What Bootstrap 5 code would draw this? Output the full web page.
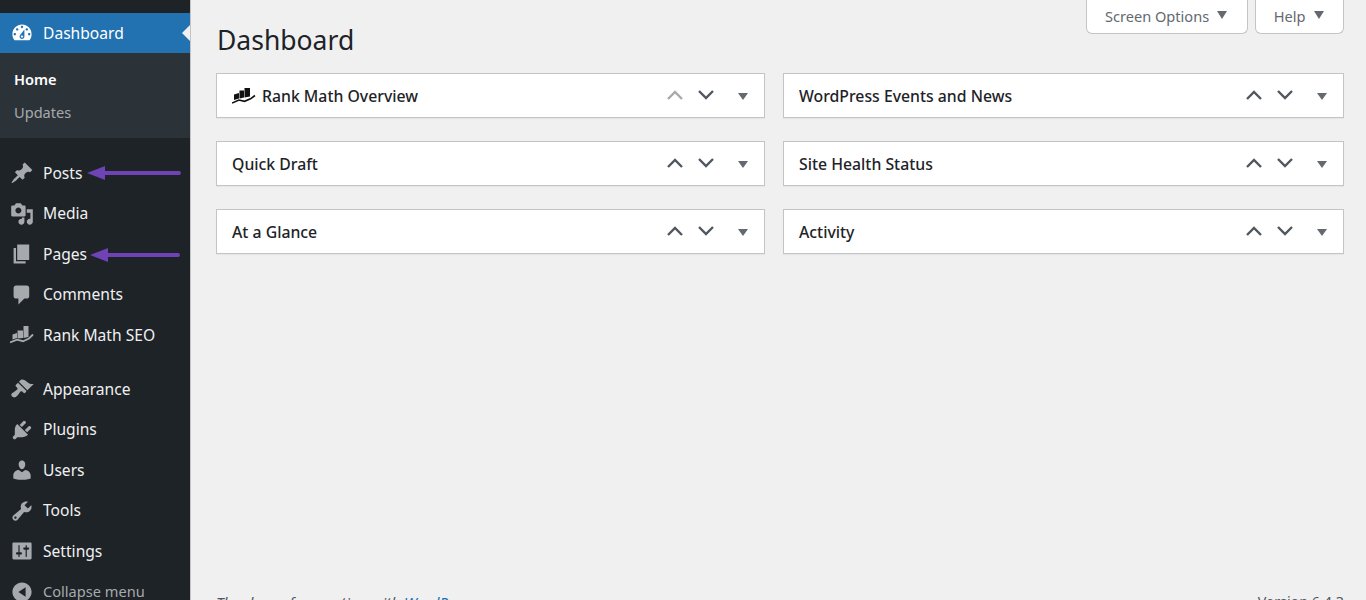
<!DOCTYPE html>
<html lang="en">
<head>
<meta charset="utf-8">
<title>Dashboard</title>
<link href="https://cdn.jsdelivr.net/npm/bootstrap@5.3.0/dist/css/bootstrap.min.css" rel="stylesheet">
<style>
html, body { height: 600px; overflow: hidden; }
body { background: #f0f0f1; font-family: "Noto Sans", "Open Sans", sans-serif; color: #1d2327; }
.wp-shell { height: 600px; overflow: hidden; }
.wp-side { width: 190px; background: #1d2327; padding-top: 13px; flex: none; height: 600px; overflow: hidden; border-right: 1px solid #c3c4c7; box-sizing: content-box; position: relative; }
.wp-item { height: 40.5px; color: #f0f0f1; font-size: 15.6px; padding-left: 9.5px; gap: 9.5px; text-decoration: none; }
.wp-item svg { width: 24px; height: 24px; fill: #a7aaad; flex: none; }
.wp-cur { height: 40px; background: #2271b1; color: #fff; position: relative; padding-top: 2px; }
.wp-cur svg { fill: #fff; margin-top: -2px; }
.wp-cur::after { content: ""; position: absolute; right: 0; top: 12px; border: 8px solid transparent; border-right-color: #f0f0f1; border-left-width: 0; }
.wp-sub { background: #2c3338; height: 85px; padding: 10px 14px; margin-bottom: 15px; }
.wp-sub a { display: block; height: 33px; line-height: 33px; font-size: 14.6px; color: #a7aaad; text-decoration: none; }
.wp-sub a.on { color: #fff; font-weight: 600; }
.wp-gap { height: 13.5px; }
.wp-collapse { color: #a7aaad; font-size: 14.6px; }
.wp-arrow { position: absolute; height: 14px; fill: #6f42b5; }
.wp-arrow-a { left: 87px; top: 166px; width: 94px; }
.wp-arrow-b { left: 90px; top: 248px; width: 90px; }
.wp-main { padding: 0 22px 0 25px; min-width: 0; position: relative; }
.wp-tabs { height: 34px; gap: 7px; }
.wp-tab { background: #fff; border: 1px solid #c3c4c7; border-top: 0; border-radius: 0 0 6px 6px; color: #646970; font-size: 14.6px; padding: 1px 19.5px 0 18px; gap: 8px; }
.wp-tab i { border: 5.5px solid transparent; border-top: 8px solid #646970; border-bottom: 0; margin-top: -4px; }
.wp-title { font-size: 26.5px; font-weight: 400; line-height: 36px; margin: -12px 0 0 1px; height: 51px; color: #1d2327; }
.wp-grid { display: grid; grid-template-columns: 549px 561px; column-gap: 18px; row-gap: 23px; }
.wp-box { height: 45px; background: #fff; border: 1px solid #c3c4c7; padding: 3px 15px 0; font-size: 15.8px; font-weight: 500; color: #1d2327; box-shadow: 0 1px 1px rgba(0,0,0,.04); }
.wp-logo { width: 24px; height: 16px; margin-right: 6px; margin-top: -3px; flex: none; fill: #111; }
.wp-logo path + path { fill: none; stroke: #111; stroke-width: 1.6; }
.wp-ctl { width: 83px; margin-right: 1px; flex: none; }
.wp-ctl svg { width: 20px; height: 12px; fill: none; stroke: #50575e; stroke-width: 2.4; flex: none; margin-top: -4px; }
.wp-ctl svg.dim { stroke: #a7aaad; }
.wp-ctl svg + svg { margin-left: 11px; }
.wp-ctl i { border: 5.5px solid transparent; border-top: 7.5px solid #646970; border-bottom: 0; margin-left: auto; margin-top: -1px; }
.wp-foot { position: absolute; left: 25px; right: 22px; top: 591px; font-size: 14.3px; color: #50575e; }
.wp-foot em { font-size: 15.1px; }
.wp-foot a { color: #2271b1; text-decoration: underline; }
.wp-rm path + path { fill: none; stroke: #a7aaad; stroke-width: 1.8; }
</style>
</head>
<body>
<div class="wp-shell d-flex">
  <nav class="wp-side">
    <a class="wp-item wp-cur d-flex align-items-center" href="#"><svg viewBox="0 0 20 20"><path d="M3.76 16h12.48c1.1-1.37 1.76-3.11 1.76-5 0-4.42-3.58-8-8-8s-8 3.58-8 8c0 1.89.66 3.63 1.76 5zM10 4c.55 0 1 .45 1 1s-.45 1-1 1-1-.45-1-1 .45-1 1-1zM6 6c.55 0 1 .45 1 1s-.45 1-1 1-1-.45-1-1 .45-1 1-1zm8 0c.55 0 1 .45 1 1s-.45 1-1 1-1-.45-1-1 .45-1 1-1zm-5.37 5.55L12 7v6c0 1.1-.9 2-2 2s-2-.9-2-2c0-.57.24-1.08.63-1.45zM4 10c.55 0 1 .45 1 1s-.45 1-1 1-1-.45-1-1 .45-1 1-1zm12 0c.55 0 1 .45 1 1s-.45 1-1 1-1-.45-1-1 .45-1 1-1zm-5 3c0-.55-.45-1-1-1s-1 .45-1 1 .45 1 1 1 1-.45 1-1z" fill-rule="evenodd"/></svg>Dashboard</a>
    <div class="wp-sub"><a class="on" href="#">Home</a><a href="#">Updates</a></div>
    <a class="wp-item d-flex align-items-center" href="#"><svg viewBox="0 0 20 20"><path d="M10.44 3.02l1.82-1.82 6.36 6.35-1.83 1.82c-1.05-.68-2.48-.57-3.41.36l-.75.75c-.92.93-1.04 2.35-.35 3.41l-1.83 1.82-2.41-2.41-2.8 2.79c-.42.42-3.38 2.71-3.8 2.29s1.86-3.39 2.28-3.81l2.79-2.79L4.1 9.36l1.83-1.82c1.05.69 2.48.57 3.4-.36l.75-.75c.93-.92 1.05-2.35.36-3.41z"/></svg>Posts</a>
    <a class="wp-item d-flex align-items-center" href="#"><svg viewBox="0 0 20 20"><path fill-rule="evenodd" d="M13 11V4c0-.55-.45-1-1-1h-1.67L9 1H5L3.67 3H2c-.55 0-1 .45-1 1v7c0 .55.45 1 1 1h10c.55 0 1-.45 1-1zM7 4.5c1.38 0 2.5 1.12 2.5 2.5S8.38 9.5 7 9.5 4.5 8.38 4.5 7 5.62 4.5 7 4.5zM14 6h5v10.5c0 1.38-1.12 2.5-2.5 2.5S14 17.88 14 16.5s1.12-2.5 2.5-2.5c.17 0 .34.02.5.05V9h-3V6zm-4 8.05V13h2v3.5c0 1.38-1.12 2.5-2.5 2.5S7 17.88 7 16.5 8.12 14 9.5 14c.17 0 .34.02.5.05z"/></svg>Media</a>
    <a class="wp-item d-flex align-items-center" href="#"><svg viewBox="0 0 20 20"><path d="M6 15V2h10v13H6zm-1 1h8v2H3V5h2v11z"/></svg>Pages</a>
    <a class="wp-item d-flex align-items-center" href="#"><svg viewBox="0 0 20 20"><path d="M5 2h9c1.1 0 2 .9 2 2v7c0 1.1-.9 2-2 2h-2l-5 5v-5H5c-1.1 0-2-.9-2-2V4c0-1.1.9-2 2-2z"/></svg>Comments</a>
    <a class="wp-item d-flex align-items-center" href="#"><svg class="wp-rm" viewBox="0 0 24 24"><path d="M2.500 11.500l4.500-1.500v5l-4.500 1.500zM7.500 7.500h5.500v7.500l-5.500.5zM13.500 3h5v11l-5 1z"/><path d="M0 19.500l7-2.800 6 1.500 6-2.700 4-4"/></svg>Rank Math SEO</a>
    <div class="wp-gap"></div>
    <a class="wp-item d-flex align-items-center" href="#"><svg viewBox="0 0 20 20"><path d="M14.48 11.06L7.41 3.99l1.5-1.5c.5-.56 2.3-.47 3.51.32 1.21.8 1.43 1.28 2.91 2.1 1.18.64 2.45 1.26 4.45.85zm-.71.71L6.7 4.7 4.93 6.47c-.39.39-.39 1.02 0 1.41l1.06 1.06c.39.39.39 1.03 0 1.42-.6.6-1.43 1.11-2.21 1.69-.35.26-.7.53-1.01.84C1.43 13.23.4 14.95 1.8 16.35s3.12.38 4.47-.97c.31-.31.58-.66.84-1.01.58-.78 1.09-1.61 1.69-2.21.39-.39 1.03-.39 1.42 0l1.06 1.06c.39.39 1.02.39 1.41 0z"/></svg>Appearance</a>
    <a class="wp-item d-flex align-items-center" href="#"><svg viewBox="0 0 20 20"><path d="M13.11 4.36L9.87 7.6 8 5.73l3.24-3.24c.35-.34 1.05-.2 1.56.32.52.51.66 1.21.31 1.55zm-8 1.77l.91-1.12 9.01 9.01-1.19.84c-.71.71-2.63 1.16-3.82 1.16H6.14L4.9 17.26c-.59.59-1.54.59-2.12 0-.59-.58-.59-1.53 0-2.12l1.24-1.24v-3.88c0-1.13.4-3.19 1.09-3.89zm7.26 3.97l3.24-3.24c.34-.35 1.04-.21 1.55.31.52.51.66 1.21.31 1.55l-3.24 3.25z"/></svg>Plugins</a>
    <a class="wp-item d-flex align-items-center" href="#"><svg viewBox="0 0 20 20"><path d="M10 9.25c-2.27 0-2.73-3.44-2.73-3.44C7 4.02 7.82 2 9.97 2c2.16 0 2.98 2.02 2.71 3.81 0 0-.41 3.44-2.68 3.44zm0 2.57L12.72 10c2.39 0 4.52 2.33 4.52 4.53v2.49s-3.65 1.13-7.24 1.13c-3.65 0-7.24-1.13-7.24-1.13v-2.49c0-2.25 1.94-4.48 4.47-4.48z"/></svg>Users</a>
    <a class="wp-item d-flex align-items-center" href="#"><svg viewBox="0 0 20 20"><path fill-rule="evenodd" d="M16.68 9.77c-1.34 1.34-3.3 1.67-4.95.99l-5.41 6.52c-.99.99-2.59.99-3.58 0s-.99-2.59 0-3.57l6.52-5.42c-.68-1.65-.35-3.61.99-4.95 1.28-1.28 3.12-1.62 4.72-1.06l-2.89 2.89 2.82 2.82 2.86-2.87c.53 1.58.18 3.39-1.08 4.65zM3.81 16.21c.4.39 1.04.39 1.43 0 .4-.4.4-1.04 0-1.43-.39-.4-1.03-.4-1.43 0-.39.39-.39 1.03 0 1.43z"/></svg>Tools</a>
    <a class="wp-item d-flex align-items-center" href="#"><svg viewBox="0 0 20 20"><path fill-rule="evenodd" d="M18 16V4c0-.55-.45-1-1-1H3c-.55 0-1 .45-1 1v12c0 .55.45 1 1 1h14c.55 0 1-.45 1-1zM8 11h1c.55 0 1 .45 1 1s-.45 1-1 1H8v1.5c0 .28-.22.5-.5.5s-.5-.22-.5-.5V13H6c-.55 0-1-.45-1-1s.45-1 1-1h1V5.500c0-.28.22-.5.5-.5s.5.22.5.5V11zm5-2h-1c-.55 0-1-.45-1-1s.45-1 1-1h1V5.500c0-.28.22-.5.5-.5s.5.22.5.5V7h1c.55 0 1 .45 1 1s-.45 1-1 1h-1v5.500c0 .28-.22.5-.5.5s-.5-.22-.5-.5V9z"/></svg>Settings</a>
    <a class="wp-item wp-collapse d-flex align-items-center" href="#"><svg viewBox="0 0 20 20"><path fill-rule="evenodd" d="M18 10c0-4.420-3.580-8-8-8s-8 3.580-8 8 3.580 8 8 8 8-3.580 8-8zm-5-4v8l-6-4z"/></svg>Collapse menu</a>
    <svg class="wp-arrow wp-arrow-a" viewBox="0 0 94 14"><path d="M0 7 18 0V5H92a2 2 0 0 1 0 4H18V14Z"/></svg>
    <svg class="wp-arrow wp-arrow-b" viewBox="0 0 90 14"><path d="M0 7 18 0V5H88a2 2 0 0 1 0 4H18V14Z"/></svg>
  </nav>
  <main class="wp-main flex-grow-1">
    <div class="wp-tabs d-flex justify-content-end">
      <div class="wp-tab d-flex align-items-center">Screen Options <i></i></div>
      <div class="wp-tab d-flex align-items-center">Help <i></i></div>
    </div>
    <h1 class="wp-title">Dashboard</h1>
    <div class="wp-grid">
      <div class="wp-box d-flex align-items-center"><svg class="wp-logo" viewBox="0 0 24 16"><path d="M2 6.500l5-1.500v5.500L2 12zM7.500 2.500H12v7l-4.500 1zM12.500 0H18v8.500l-5.500 1z"/><path d="M0 15l7-3 5.500 1.300 6-2.500 4.500-3.300"/></svg><span class="flex-grow-1">Rank Math Overview</span><span class="wp-ctl d-flex align-items-center"><svg class="dim" viewBox="0 0 20 12"><path d="M3 10l7-7 7 7"/></svg><svg viewBox="0 0 20 12"><path d="M3 2l7 7 7-7"/></svg><i></i></span></div>
      <div class="wp-box d-flex align-items-center"><span class="flex-grow-1">WordPress Events and News</span><span class="wp-ctl d-flex align-items-center"><svg viewBox="0 0 20 12"><path d="M3 10l7-7 7 7"/></svg><svg viewBox="0 0 20 12"><path d="M3 2l7 7 7-7"/></svg><i></i></span></div>
      <div class="wp-box d-flex align-items-center"><span class="flex-grow-1">Quick Draft</span><span class="wp-ctl d-flex align-items-center"><svg viewBox="0 0 20 12"><path d="M3 10l7-7 7 7"/></svg><svg viewBox="0 0 20 12"><path d="M3 2l7 7 7-7"/></svg><i></i></span></div>
      <div class="wp-box d-flex align-items-center"><span class="flex-grow-1">Site Health Status</span><span class="wp-ctl d-flex align-items-center"><svg viewBox="0 0 20 12"><path d="M3 10l7-7 7 7"/></svg><svg viewBox="0 0 20 12"><path d="M3 2l7 7 7-7"/></svg><i></i></span></div>
      <div class="wp-box d-flex align-items-center"><span class="flex-grow-1">At a Glance</span><span class="wp-ctl d-flex align-items-center"><svg viewBox="0 0 20 12"><path d="M3 10l7-7 7 7"/></svg><svg viewBox="0 0 20 12"><path d="M3 2l7 7 7-7"/></svg><i></i></span></div>
      <div class="wp-box d-flex align-items-center"><span class="flex-grow-1">Activity</span><span class="wp-ctl d-flex align-items-center"><svg viewBox="0 0 20 12"><path d="M3 10l7-7 7 7"/></svg><svg viewBox="0 0 20 12"><path d="M3 2l7 7 7-7"/></svg><i></i></span></div>
    </div>
    <div class="wp-foot d-flex justify-content-between"><em>Thank you for creating with <a href="#">WordPress</a>.</em><span>Version 6.4.3</span></div>
  </main>
</div>
</body>
</html>
